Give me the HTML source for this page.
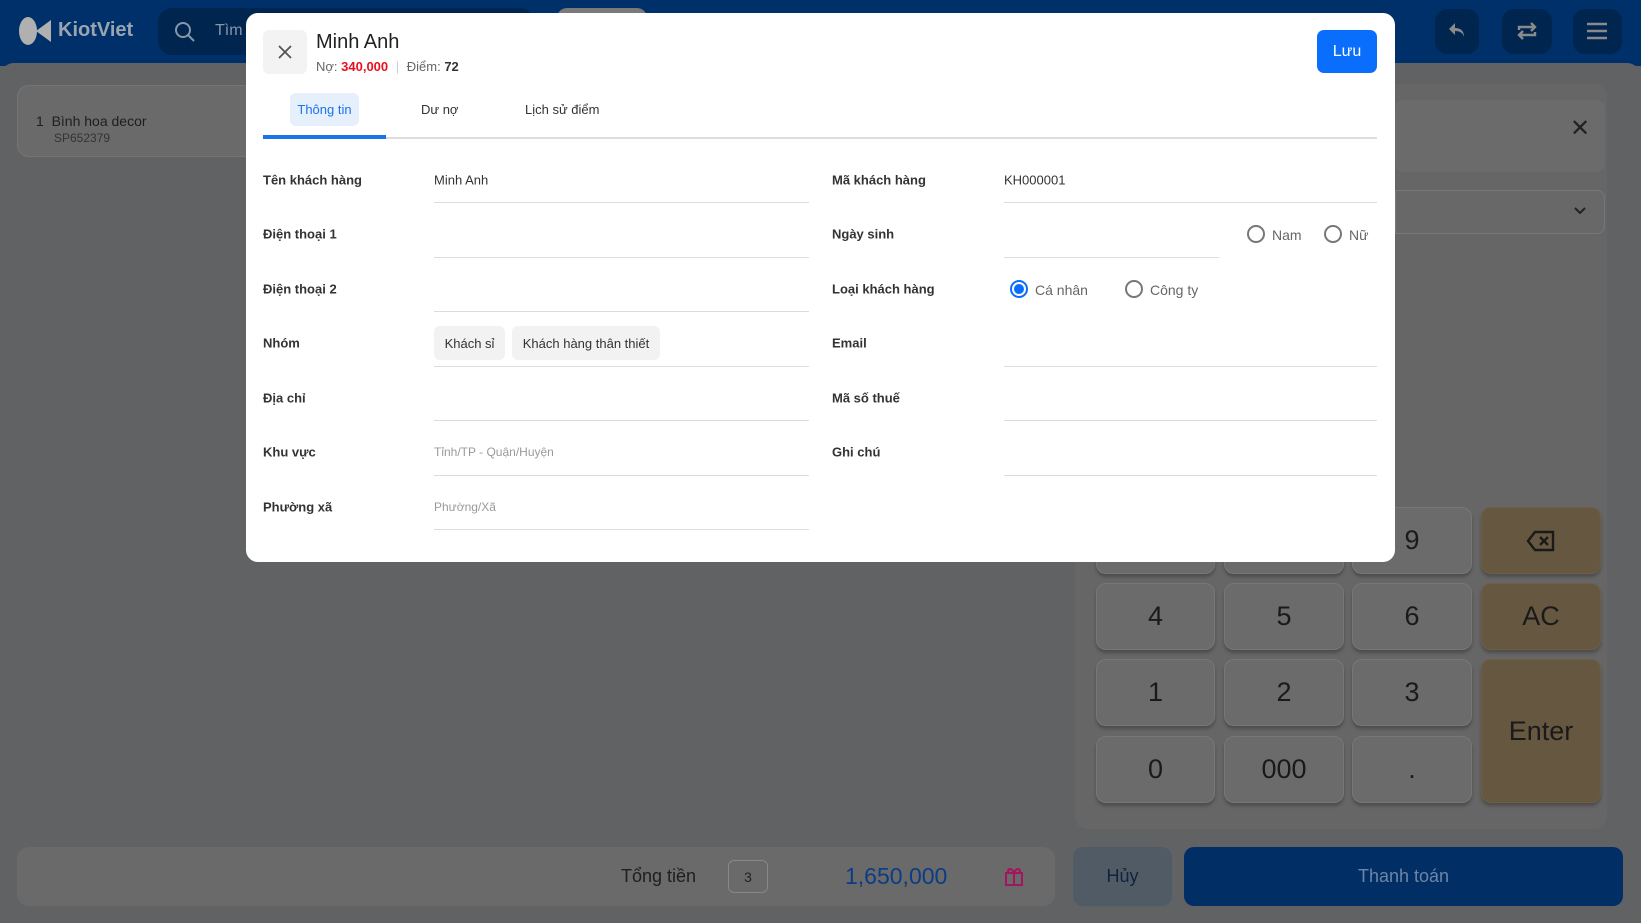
<!DOCTYPE html>
<html><head><meta charset="utf-8"><style>
*{box-sizing:border-box;margin:0;padding:0}
body{width:1641px;height:923px;overflow:hidden;background:#606162;font-family:"Liberation Sans",sans-serif;position:relative;color:#222}
.abs{position:absolute}
.top{left:0;top:0;width:1641px;height:66px;background:#00306a}
.main{left:0;top:63px;width:1641px;height:860px;background:#616263;border-radius:14px 14px 0 0}
.card{background:#6a6a6a;border-radius:12px}
.key{background:#6b6b6b;border:1px solid #777;border-radius:10px;box-shadow:0 3px 3px rgba(0,0,0,.25);display:flex;align-items:center;justify-content:center;font-size:27px;color:#1a1a1a}
.ok{background:#665740;border-color:#6e5e45}
.modal{left:246px;top:13px;width:1149px;height:549px;background:#fff;border-radius:12px}
.lbl{position:absolute;font-size:13px;font-weight:bold;color:#333;transform:translateY(-50%)}
.val{position:absolute;font-size:13px;color:#333;transform:translateY(-50%)}
.ph{color:#9a9a9a}
.ln{position:absolute;height:1px;background:#dcdcdc}
.rad{position:absolute;width:18px;height:18px;border:2px solid #777;border-radius:50%;transform:translate(-50%,-50%)}
.rad.on{border-color:#0a6efc}
.rad.on:after{content:"";position:absolute;left:2px;top:2px;width:10px;height:10px;border-radius:50%;background:#0a6efc}
.rt{position:absolute;font-size:14px;color:#666;transform:translateY(-50%)}
.chip{position:absolute;top:326px;height:34px;background:#f2f2f2;border-radius:6px;font-size:13px;color:#333;display:flex;align-items:center;justify-content:center}
</style></head><body>
<div class="abs top"></div>
<!-- logo -->
<svg class="abs" style="left:18px;top:16px" width="34" height="30" viewBox="0 0 34 30"><ellipse cx="10" cy="15" rx="9" ry="14" fill="#b0b0b0"/><path d="M33 4 L18 15 L33 26Z" fill="#b0b0b0"/></svg>
<div class="abs" style="left:58px;top:19px;font-size:20px;font-weight:bold;color:#9aa4b0">KiotViet</div>
<div class="abs" style="left:158px;top:8px;width:376px;height:47px;background:#00254f;border-radius:14px"></div>
<svg class="abs" style="left:174px;top:21px" width="22" height="22" viewBox="0 0 22 22"><circle cx="9" cy="9" r="7" stroke="#8896a8" stroke-width="2" fill="none"/><path d="M14 14l6 6" stroke="#8896a8" stroke-width="2"/></svg>
<div class="abs" style="left:215px;top:22px;font-size:16px;color:#8896a8">Tìm</div>
<div class="abs" style="left:557px;top:8px;width:90px;height:10px;background:#7a7a7a;border-radius:10px 10px 0 0"></div>
<div class="abs" style="left:1435px;top:9px;width:44px;height:45px;background:#00254f;border-radius:12px"></div>
<div class="abs" style="left:1502px;top:9px;width:50px;height:45px;background:#00254f;border-radius:12px"></div>
<div class="abs" style="left:1573px;top:9px;width:49px;height:45px;background:#00254f;border-radius:12px"></div>
<svg class="abs" style="left:1447px;top:20px" width="20" height="20" viewBox="0 0 20 20"><path d="M8 3L2 9l6 6V11c5 0 8 2 9 6 0-6-3-9-9-9z" fill="#8a8a8a"/></svg>
<svg class="abs" style="left:1515px;top:19px" width="24" height="24" viewBox="0 0 24 24" fill="none" stroke="#8a8a8a" stroke-width="2.4"><path d="M4 11V8h15M16 4l4 4-4 4M20 13v3H5M8 20l-4-4 4-4"/></svg>
<svg class="abs" style="left:1586px;top:22px" width="22" height="18" viewBox="0 0 22 18" stroke="#8a8a8a" stroke-width="2.6"><path d="M1 2h20M1 9h20M1 16h20"/></svg>

<div class="abs main"></div>
<!-- left item -->
<div class="abs card" style="left:17px;top:85px;width:300px;height:72px;border:1px solid #757575"></div>
<div class="abs" style="left:36px;top:113px;font-size:14px;color:#1e1e1e">1&nbsp;&nbsp;Bình hoa decor</div>
<div class="abs" style="left:54px;top:131px;font-size:12px;color:#333">SP652379</div>
<!-- right panel -->
<div class="abs card" style="left:1075px;top:84px;width:532px;height:745px;background:#666"></div>
<div class="abs" style="left:1395px;top:100px;width:210px;height:72px;background:#6b6b6b;border-radius:8px"></div>
<div class="abs" style="left:1570px;top:114px;font-size:24px;color:#222">✕</div>
<div class="abs" style="left:1395px;top:190px;width:210px;height:44px;border:1px solid #777;border-radius:0 8px 8px 0;background:#686868"></div>
<svg class="abs" style="left:1573px;top:206px" width="14" height="10" viewBox="0 0 14 10"><path d="M2 2l5 5 5-5" stroke="#222" stroke-width="2" fill="none"/></svg>
<!-- keypad -->
<div class="abs key" style="left:1096px;top:507px;width:119px;height:67px"></div>
<div class="abs key" style="left:1224px;top:507px;width:120px;height:67px"></div>
<div class="abs key" style="left:1352px;top:507px;width:120px;height:67px">9</div>
<div class="abs key ok" style="left:1481px;top:507px;width:120px;height:67px"><svg width="30" height="22" viewBox="0 0 30 22" fill="none" stroke="#1a1a1a" stroke-width="2.4"><path d="M9 2h18v18H9L2 11z"/><path d="M14 7l8 8M22 7l-8 8"/></svg></div>
<div class="abs key" style="left:1096px;top:583px;width:119px;height:67px">4</div>
<div class="abs key" style="left:1224px;top:583px;width:120px;height:67px">5</div>
<div class="abs key" style="left:1352px;top:583px;width:120px;height:67px">6</div>
<div class="abs key ok" style="left:1481px;top:583px;width:120px;height:67px">AC</div>
<div class="abs key" style="left:1096px;top:659px;width:119px;height:67px">1</div>
<div class="abs key" style="left:1224px;top:659px;width:120px;height:67px">2</div>
<div class="abs key" style="left:1352px;top:659px;width:120px;height:67px">3</div>
<div class="abs key ok" style="left:1481px;top:659px;width:120px;height:144px">Enter</div>
<div class="abs key" style="left:1096px;top:736px;width:119px;height:67px">0</div>
<div class="abs key" style="left:1224px;top:736px;width:120px;height:67px">000</div>
<div class="abs key" style="left:1352px;top:736px;width:120px;height:67px">.</div>
<!-- bottom -->
<div class="abs card" style="left:17px;top:847px;width:1038px;height:59px"></div>
<div class="abs" style="left:621px;top:866px;font-size:18px;color:#1e1e1e">Tổng tiền</div>
<div class="abs" style="left:728px;top:860px;width:40px;height:33px;border:1px solid #888;border-radius:6px;font-size:14px;display:flex;align-items:center;justify-content:center;color:#222">3</div>
<div class="abs" style="left:845px;top:863px;font-size:23px;color:#0a3d85">1,650,000</div>
<svg class="abs" style="left:1003px;top:865px" width="22" height="22" viewBox="0 0 22 22" fill="none" stroke="#a3155e" stroke-width="2"><rect x="3" y="8" width="16" height="12"/><path d="M2 8h18M11 8v12M11 8c-2-5-6-5-6-2s6 2 6 2c2-5 6-5 6-2s-6 2-6 2"/></svg>
<div class="abs" style="left:1073px;top:847px;width:99px;height:59px;background:#515b66;border-radius:10px;font-size:18px;color:#0f2440;display:flex;align-items:center;justify-content:center">Hủy</div>
<div class="abs" style="left:1184px;top:847px;width:439px;height:59px;background:#002e65;border-radius:10px;font-size:18px;color:#6e86a6;display:flex;align-items:center;justify-content:center">Thanh toán</div>

<!-- modal -->
<div class="abs modal">
</div>
<div class="abs" style="left:263px;top:30px;width:44px;height:44px;background:#f3f3f3;border-radius:6px"></div>
<svg class="abs" style="left:278px;top:45px" width="14" height="14" viewBox="0 0 14 14" stroke="#555" stroke-width="1.8"><path d="M1 1l12 12M13 1L1 13"/></svg>
<div class="abs" style="left:316px;top:31px;font-size:20px;color:#222">Minh Anh</div>
<div class="abs" style="left:316px;top:59px;font-size:13px;color:#666">Nợ: <b style="color:#e8101e">340,000</b> <span style="color:#ccc;margin:0 4px">|</span> Điểm: <b style="color:#333">72</b></div>
<div class="abs" style="left:1317px;top:30px;width:60px;height:43px;background:#0a6efc;border-radius:7px;color:#fff;font-size:16px;display:flex;align-items:center;justify-content:center">Lưu</div>
<div class="abs" style="left:290px;top:93px;width:69px;height:33px;background:#e6f0fd;border-radius:6px;color:#1a73e8;font-size:13px;display:flex;align-items:center;justify-content:center">Thông tin</div>
<div class="abs" style="left:421px;top:102px;font-size:13px;color:#333">Dư nợ</div>
<div class="abs" style="left:525px;top:102px;font-size:13px;color:#333">Lịch sử điểm</div>
<div class="abs" style="left:263px;top:137px;width:1114px;height:2px;background:#ddd"></div>
<div class="abs" style="left:263px;top:135px;width:123px;height:4px;background:#1a73e8"></div>

<div class="lbl" style="left:263px;top:180px">Tên khách hàng</div><div class="val" style="left:434px;top:180px">Minh Anh</div><div class="ln" style="left:434px;top:202px;width:375px"></div>
<div class="lbl" style="left:263px;top:234px">Điện thoại 1</div><div class="ln" style="left:434px;top:257px;width:375px"></div>
<div class="lbl" style="left:263px;top:289px">Điện thoại 2</div><div class="ln" style="left:434px;top:311px;width:375px"></div>
<div class="lbl" style="left:263px;top:343px">Nhóm</div>
<div class="chip" style="left:434px;width:71px">Khách sỉ</div><div class="chip" style="left:512px;width:148px">Khách hàng thân thiết</div>
<div class="ln" style="left:434px;top:366px;width:375px"></div>
<div class="lbl" style="left:263px;top:398px">Địa chỉ</div><div class="ln" style="left:434px;top:420px;width:375px"></div>
<div class="lbl" style="left:263px;top:452px">Khu vực</div><div class="val ph" style="left:434px;top:452px;font-size:12px">Tỉnh/TP - Quận/Huyện</div><div class="ln" style="left:434px;top:475px;width:375px"></div>
<div class="lbl" style="left:263px;top:507px">Phường xã</div><div class="val ph" style="left:434px;top:507px;font-size:12px">Phường/Xã</div><div class="ln" style="left:434px;top:529px;width:375px"></div>

<div class="lbl" style="left:832px;top:180px">Mã khách hàng</div><div class="val" style="left:1004px;top:180px">KH000001</div><div class="ln" style="left:1004px;top:202px;width:373px"></div>
<div class="lbl" style="left:832px;top:234px">Ngày sinh</div><div class="ln" style="left:1004px;top:257px;width:215px"></div>
<div class="rad" style="left:1256px;top:234px"></div><div class="rt" style="left:1272px;top:235px">Nam</div>
<div class="rad" style="left:1333px;top:234px"></div><div class="rt" style="left:1349px;top:235px">Nữ</div>
<div class="lbl" style="left:832px;top:289px">Loại khách hàng</div>
<div class="rad on" style="left:1019px;top:289px"></div><div class="rt" style="left:1035px;top:290px">Cá nhân</div>
<div class="rad" style="left:1134px;top:289px"></div><div class="rt" style="left:1150px;top:290px">Công ty</div>
<div class="lbl" style="left:832px;top:343px">Email</div><div class="ln" style="left:1004px;top:366px;width:373px"></div>
<div class="lbl" style="left:832px;top:398px">Mã số thuế</div><div class="ln" style="left:1004px;top:420px;width:373px"></div>
<div class="lbl" style="left:832px;top:452px">Ghi chú</div><div class="ln" style="left:1004px;top:475px;width:373px"></div>
</body></html>
